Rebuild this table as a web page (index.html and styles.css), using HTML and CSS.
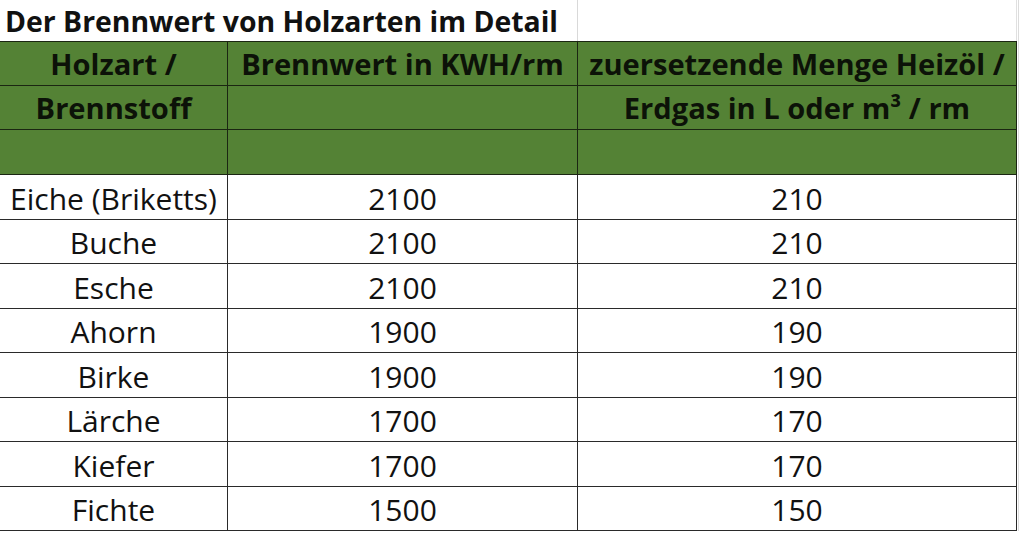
FILE: index.html
```html
<!DOCTYPE html>
<html lang="de">
<head>
<meta charset="utf-8">
<title>Der Brennwert von Holzarten im Detail</title>
<link rel="stylesheet" href="styles.css">
</head>
<body>
<div class="sheet">
  <div class="cell title span2 r-title">Der Brennwert von Holzarten im Detail</div>
  <div class="cell blank r-title"></div>
  <div class="cell edge r-title"></div>

  <div class="cell head top">Holzart /</div>
  <div class="cell head top">Brennwert in KWH/rm</div>
  <div class="cell head top">zuersetzende Menge Heizöl /</div>
  <div class="cell edge"></div>

  <div class="cell head">Brennstoff</div>
  <div class="cell head"></div>
  <div class="cell head">Erdgas in L oder m³ / rm</div>
  <div class="cell edge"></div>

  <div class="cell head"></div>
  <div class="cell head"></div>
  <div class="cell head"></div>
  <div class="cell edge"></div>

  <div class="cell data">Eiche (Briketts)</div><div class="cell data">2100</div><div class="cell data">210</div><div class="cell edge"></div>
  <div class="cell data">Buche</div><div class="cell data">2100</div><div class="cell data">210</div><div class="cell edge"></div>
  <div class="cell data">Esche</div><div class="cell data">2100</div><div class="cell data">210</div><div class="cell edge"></div>
  <div class="cell data">Ahorn</div><div class="cell data">1900</div><div class="cell data">190</div><div class="cell edge"></div>
  <div class="cell data">Birke</div><div class="cell data">1900</div><div class="cell data">190</div><div class="cell edge"></div>
  <div class="cell data">Lärche</div><div class="cell data">1700</div><div class="cell data">170</div><div class="cell edge"></div>
  <div class="cell data">Kiefer</div><div class="cell data">1700</div><div class="cell data">170</div><div class="cell edge"></div>
  <div class="cell data">Fichte</div><div class="cell data">1500</div><div class="cell data">150</div><div class="cell edge"></div>
</div>
</body>
</html>
```
FILE: styles.css
```css
html, body {
  margin: 0;
  padding: 0;
  background: #ffffff;
}

body {
  font-family: "Open Sans", "Noto Sans", sans-serif;
  color: #111111;
  width: 1024px;
  height: 537px;
  overflow: hidden;
}

.sheet {
  display: grid;
  grid-template-columns: 228px 350px 439px 7px;
  grid-template-rows: 41px 45px 44px 45px 45px 44px 45px 44px 45px 44px 45px 44px;
}

.cell {
  box-sizing: border-box;
  display: flex;
  align-items: center;
  justify-content: center;
  white-space: nowrap;
  overflow: visible;
}

.span2 {
  grid-column: span 2;
}

.title {
  justify-content: flex-start;
  padding-left: 5px;
  font-weight: 700;
  font-size: 28.4px;
  border-right: 1px solid #d9d9d9;
}

.blank {
  border-right: 1px solid #e0e0e0;
}

.edge {
  border-left: 1px solid #dcdcdc;
  margin-left: 1px;
}

.head {
  background: #548235;
  font-weight: 700;
  font-size: 29.1px;
  color: #0c1208;
  border-right: 1px solid #1b2612;
  border-bottom: 1px solid #1b2612;
}

.head.top {
  border-top: 1px solid #1b2612;
}

.data {
  font-size: 30px;
  font-weight: 400;
  color: #111111;
  border-right: 1px solid #2a2a2a;
  border-bottom: 1px solid #2a2a2a;
  padding-top: 2px;
}
```
